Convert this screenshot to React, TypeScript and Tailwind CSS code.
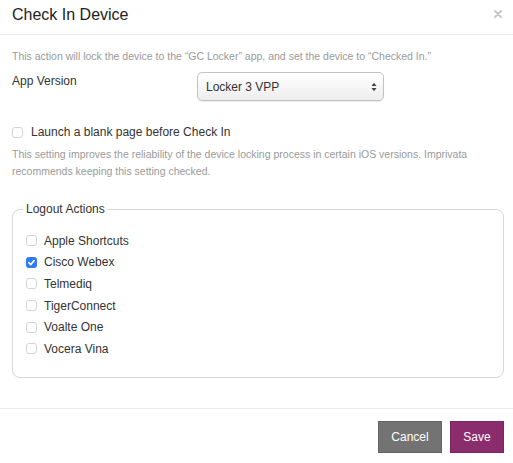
import React from "react";

function Box({ checked }: { checked?: boolean }) {
  if (checked) {
    return (
      <span className="flex h-[11px] w-[11px] shrink-0 items-center justify-center rounded-[3px] bg-[#2f7bf5]">
        <svg width="9" height="9" viewBox="0 0 10 10">
          <path d="M2 5.2 L4.2 7.3 L8 2.8" fill="none" stroke="white" strokeWidth="1.8" strokeLinecap="round" strokeLinejoin="round" />
        </svg>
      </span>
    );
  }
  return <span className="block h-[11px] w-[11px] shrink-0 rounded-[3px] border border-[#d4d4d4] bg-white" />;
}

const items = [
  { label: "Apple Shortcuts", checked: false },
  { label: "Cisco Webex", checked: true },
  { label: "Telmediq", checked: false },
  { label: "TigerConnect", checked: false },
  { label: "Voalte One", checked: false },
  { label: "Vocera Vina", checked: false },
];

export default function App() {
  return (
    <div className="h-[463px] w-[513px] overflow-hidden bg-white text-[#333] font-['Liberation_Sans',Arial,sans-serif]">
      <div className="flex h-[35px] items-start justify-between border-b border-[#e8e8e8] pl-[12px] pr-[11px] pt-[6px]">
        <h1 className="text-[16px] leading-[18px] font-normal text-[#222]">Check In Device</h1>
        <svg className="mt-[4px]" width="8" height="8" viewBox="0 0 8 8">
          <path d="M1 1 L7 7 M7 1 L1 7" stroke="#c6c6c6" strokeWidth="1.8" strokeLinecap="round" />
        </svg>
      </div>
      <div className="pl-[12px] pr-[9px]">
        <p className="mt-[13px] text-[10.5px] leading-[16px] text-[#9a9a9a]">
          This action will lock the device to the “GC Locker” app, and set the device to “Checked In.”
        </p>
        <div className="mt-[8px] flex items-start">
          <div className="w-[185px] pt-[1px] text-[12px] leading-[16px]">App Version</div>
          <div className="flex h-[29px] w-[187px] items-center justify-between rounded-[5px] border border-[#c2c2c2] bg-gradient-to-b from-white to-[#ededed] pl-[8px] pr-[6px] shadow-[0_1px_1px_rgba(0,0,0,0.08)]">
            <span className="text-[12px] leading-[16px] text-[#333]">Locker 3 VPP</span>
            <svg width="6" height="10" viewBox="0 0 6 10">
              <path d="M0.5 4 L3 0.8 L5.5 4 Z" fill="#444" />
              <path d="M0.5 6 L3 9.2 L5.5 6 Z" fill="#444" />
            </svg>
          </div>
        </div>
        <div className="mt-[23px] flex items-center gap-[8px] text-[12px] leading-[16px]">
          <Box />
          <span>Launch a blank page before Check In</span>
        </div>
        <p className="mt-[6px] text-[10.5px] leading-[17px] text-[#9a9a9a]">
          This setting improves the reliability of the device locking process in certain iOS versions. Imprivata recommends keeping this setting checked.
        </p>
        <fieldset className="mt-[21px] rounded-[8px] border border-[#d6d6d6] pb-[17px] pl-[13px]">
          <legend className="-ml-[3px] px-[3px] text-[12px] leading-[16px]">Logout Actions</legend>
          <div className="pt-[13px]">
            {items.map((it) => (
              <div key={it.label} className="flex h-[21.6px] items-center gap-[7px] text-[12px]">
                <Box checked={it.checked} />
                <span>{it.label}</span>
              </div>
            ))}
          </div>
        </fieldset>
      </div>
      <div className="mt-[30px] flex justify-end gap-[8px] border-t border-[#ececec] pr-[9px] pt-[12px]">
        <button className="h-[32px] w-[64px] border border-[#646464] bg-[#737373] text-[12px] text-white">Cancel</button>
        <button className="h-[32px] w-[54px] border border-[#7d2562] bg-[#8b2c6d] text-[12px] text-white">Save</button>
      </div>
    </div>
  );
}
